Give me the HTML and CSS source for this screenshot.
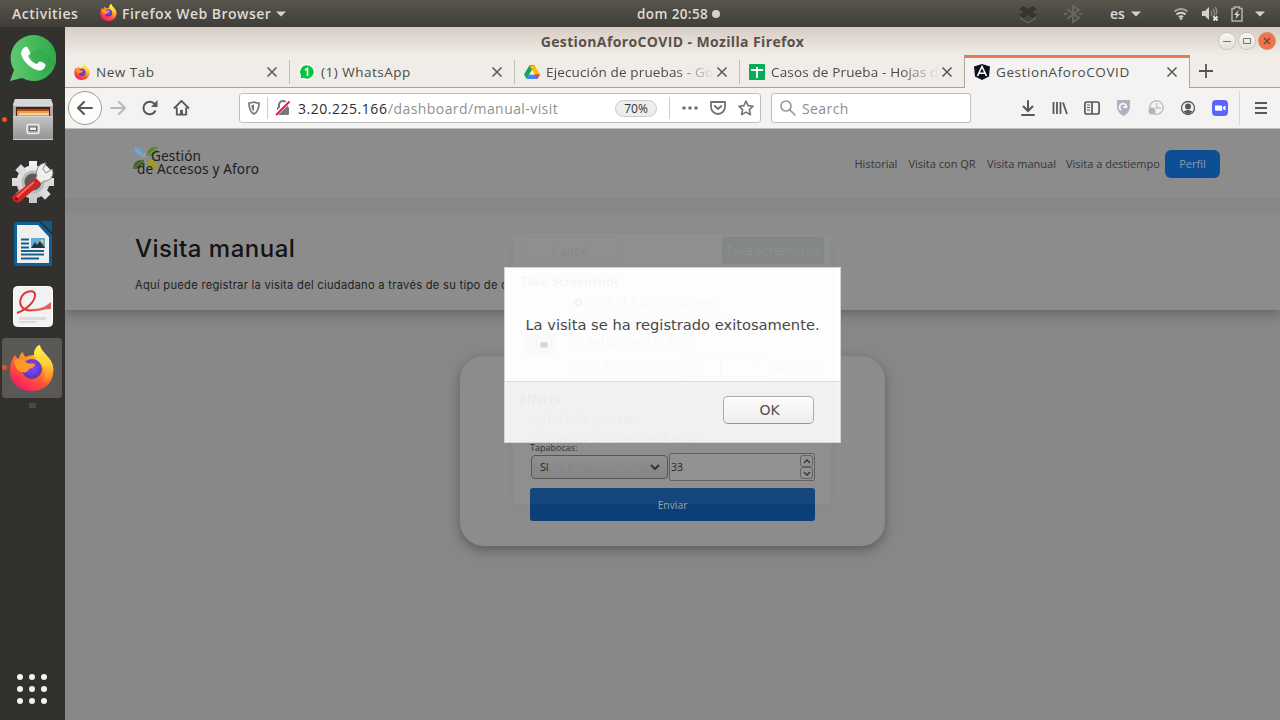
FILE: index.html
```html
<!DOCTYPE html>
<html lang="es">
<head>
<meta charset="utf-8">
<title>GestionAforoCOVID</title>
<link rel="stylesheet" href="styles.css">
</head>
<body>
<svg class="defs" width="0" height="0" aria-hidden="true">
  <defs>
    <linearGradient id="flame" x1="0.85" y1="0" x2="0.25" y2="1"><stop offset="0" stop-color="#fff44f"/><stop offset=".35" stop-color="#ffa62b"/><stop offset=".65" stop-color="#ff5634"/><stop offset="1" stop-color="#f5156c"/></linearGradient>
    <linearGradient id="tail" x1="0" y1="0" x2="0" y2="1"><stop offset="0" stop-color="#fff44f"/><stop offset=".5" stop-color="#ffcf33"/><stop offset="1" stop-color="#ff7a2b"/></linearGradient>
    <radialGradient id="globe" cx=".5" cy=".4" r=".6"><stop offset="0" stop-color="#8a4bff"/><stop offset="1" stop-color="#5335b5"/></radialGradient>
    <linearGradient id="steel" x1="0" y1="0" x2="0" y2="1"><stop offset="0" stop-color="#c4c4c4"/><stop offset="1" stop-color="#929292"/></linearGradient>
    <linearGradient id="gear" x1="0" y1="0" x2="0" y2="1"><stop offset="0" stop-color="#f2f2f2"/><stop offset="1" stop-color="#c6c6c6"/></linearGradient>
    <linearGradient id="wa" x1="0" y1="0" x2="1" y2="0"><stop offset="0" stop-color="#5fc972"/><stop offset="1" stop-color="#2eaa48"/></linearGradient>
    <symbol id="firefox" viewBox="0 0 44 46">
      <path fill="url(#flame)" d="M5 10c1 2 2 3 4 4 0-3 1-5 4-7 0 2 1 4 3 5 2-1 5-2 8-2 0-4 2-8 6-10 0 4 4 7 7 11 6 6 7 12 6 18-1 10-10 17-21 17C9 46 0 38 0 25c0-6 2-11 5-15z"/>
      <path fill="url(#tail)" d="M24 8c1-4 2-7 6-8 0 4 4 7 7 11 6 6 7 12 6 17-2 6-6 9-11 9 3-3 4-9 1-14-2-4-8-8-9-15z"/>
      <circle cx="22" cy="24" r="10" fill="url(#globe)"/>
      <path fill="#ff9a28" d="M5 15c5-2 8 0 12 3 2 1 5 0 8 1 0 3-3 4-6 5-1 3-4 4-7 3-3-1-5-2-6-5-1-2-2-4-1-7z"/>
    </symbol>
    <symbol id="close" viewBox="0 0 12 12"><path d="M1.500 1.500l9 9M10.500 1.500l-9 9" fill="none" stroke="#575754" stroke-width="1.500"/></symbol>
    <symbol id="caret" viewBox="0 0 10 6"><path d="M0 .5h10L5 5.500z" fill="#d5d2cc"/></symbol>
  </defs>
</svg>

<header class="topbar">
  <span class="activities">Activities</span>
  <svg class="tb-fox" width="17" height="17"><use href="#firefox"/></svg>
  <span class="appname">Firefox Web Browser</span>
  <svg class="tb-caret" width="10" height="6"><use href="#caret"/></svg>
  <span class="clock">dom 20:58</span><i class="dot"></i>
  <div class="tray">
    <svg width="20" height="20" viewBox="0 0 20 20" fill="#353431"><path d="M5.500 2L1 5l4.500 3L1 11l4.500 3 4.500-3 4.500 3 4.500-3-4.500-3 4.500-3-4.500-3L10 5z"/><path d="M2 14l8 5 8-5" fill="none" stroke="#77746d"/></svg>
    <svg class="bt" width="20" height="20" viewBox="0 0 20 20" fill="none" stroke="#69665f" stroke-width="2"><path d="M4 5l12 9-6 4V2l6 4-12 9M1 10h3M16 10h3"/></svg>
    <span class="lang">es</span>
    <svg class="lang-caret" width="10" height="6"><use href="#caret"/></svg>
    <svg class="wifi" width="16" height="14" viewBox="0 0 16 14" fill="none" stroke="#d5d2cc" stroke-width="2"><path d="M1.500 4.500C5 1 11 1 14.500 4.500" stroke="#a5a29c"/><path d="M3.500 7.500C6 5 10 5 12.500 7.500M6 10c1-1 3-1 4 0"/><path d="M6 10.500h4l-2 3z" fill="#d5d2cc" stroke="none"/></svg>
    <svg class="vol" width="18" height="16" viewBox="0 0 18 16"><path d="M1 5h3l4-4v13L4 10H1z" fill="#d5d2cc"/><path d="M10 5q1.500 2.500 0 5M12 3q3 4 0 9M14 1q3 4 1 8" fill="none" stroke="#8b8881" stroke-width="1.500"/><path d="M12.500 10.500l4 4m0-4l-4 4" stroke="#e5e2dc" stroke-width="2"/></svg>
    <svg class="bat" width="12" height="16" viewBox="0 0 12 16"><path d="M1 2.500h2.500V1h5v1.500H11V15H1z" fill="none" stroke="#b5b2ac" stroke-width="1.500"/><path d="M7.500 4L3 9h2.500L4.500 13 9 8H6.500z" fill="#d5d2cc"/></svg>
    <svg width="10" height="6"><use href="#caret"/></svg>
  </div>
</header>

<div class="desktop">
  <nav class="dock">
    <div class="dock-item"><svg width="46" height="47" viewBox="0 0 46 47"><path d="M23 0a23 23 0 1 1-11 43L0 46l4-11A23 23 0 0 1 23 0z" fill="url(#wa)"/><path d="M21 18l9-5 13 12q0 7-8 14L24 30z" fill="#2ba044" opacity=".35"/><path d="M15 12c2-1 3 0 5 5 1 2-1 3-2 4 2 4 5 7 9 8 2-3 3-3 5-2 4 2 4 3 3 5-2 5-9 4-14 0-5-3-9-9-10-13 0-3 2-6 4-7z" fill="#fff"/></svg></div>
    <div class="dock-item running"><svg width="42" height="42" viewBox="0 0 42 42"><path d="M3 0h36l2 5v36H1V5z" fill="#aaa"/><path d="M3 0h36l2 7H1z" fill="#d7d7d7"/><path d="M4 8h34v11H4z" fill="#3c2615"/><path d="M5 10h32v3H5z" fill="#b2480f"/><path d="M5 12h32v5H5z" fill="#ef9950"/><path d="M7 14h30v2H7z" fill="#fbd196"/><path d="M1 17h40v24H1z" fill="url(#steel)"/><path d="M1 17.500h40M1 40.500h40" stroke="#d0d0d0"/><rect x="15" y="25.500" width="12" height="9" rx="1.500" fill="#aaa" stroke="#ececec" stroke-width="1.500"/><rect x="17.500" y="28" width="7" height="3.500" fill="#eee" stroke="#666"/></svg></div>
    <div class="dock-item"><svg width="42" height="44" viewBox="0 0 42 44"><g fill="url(#gear)"><circle cx="21" cy="22" r="16.500"/><path d="M17 1h8v9h-8zM17 34h8v9h-8zM0 18h9v8H0zM33 18h9v8h-9z"/><path d="M17 1h8v9h-8zM17 34h8v9h-8zM0 18h9v8H0zM33 18h9v8h-9z" transform="rotate(45 21 22)"/></g><circle cx="21" cy="22" r="10" fill="#5b5855" stroke="#bbb" stroke-width="3"/><path d="M25 16c-2-6 2-13 9-13l-3 6 3 4 6-4c3 6-2 13-8 12l-4 3-5-5z" fill="#eee" stroke="#888"/><path d="M24 18l5 5L8 42q-3 2-6-1t-1-5z" fill="#cf2525"/><path d="M22 22L5 37" stroke="#f06a5e" stroke-width="2"/><circle cx="4.500" cy="39" r="1.500" fill="#691010"/></svg></div>
    <div class="dock-item"><svg width="38" height="46" viewBox="0 0 38 46"><path d="M2 1h23l13 13v30q0 1-1 1H2q-2 0-2-2V3q0-2 2-2z" fill="#0d5f99"/><path d="M27 0h11v11z" fill="#0b5b93"/><path d="M3 4h21l11 12v26H3z" fill="#efefef"/><path d="M7 18.500h8M7 22.500h8M7 26.500h8M7 30h23M7 33.500h23M7 37.500h18" stroke="#17618f" stroke-width="1.800"/><path d="M17 17h14v10H17z" fill="#65add5"/><path d="M17 27l4-6 2 3 3-4 5 7z" fill="#26333b"/><circle cx="28" cy="20" r="1.500" fill="#ecd444"/></svg></div>
    <div class="dock-item"><svg width="40" height="41" viewBox="0 0 40 41"><rect x=".5" y=".5" width="39" height="40" rx="4" fill="#f2f2f2" stroke="#fff"/><path d="M6 31h27v3H6zM6 35h17v2H6z" fill="#dcdcdc"/><path d="M4 27C15 23 23 14 22 8 21 3 11 5 8 12 5 20 11 26 21 24" fill="none" stroke="#d73a3a" stroke-width="2"/><path d="M20 23c8 0 13-3 18-7v7c-7 0-12 3-18 2z" fill="#e06464"/></svg></div>
    <div class="dock-item active running"><svg width="44" height="46"><use href="#firefox"/></svg></div>
    <i class="ghost-item"></i>
    <div class="apps"><i></i><i></i><i></i><i></i><i></i><i></i><i></i><i></i><i></i></div>
  </nav>

  <section class="window">
    <div class="titlebar"><span class="wtitle">GestionAforoCOVID - Mozilla Firefox</span>
      <div class="wbtns"><i class="wb"><svg width="10" height="10" viewBox="0 0 10 10"><path d="M1 5.500h8" stroke="#77736d" stroke-width="1"/></svg></i><i class="wb"><svg width="10" height="10" viewBox="0 0 10 10"><path d="M1.500 2.500h7v5h-7z" fill="none" stroke="#77736d"/></svg></i><i class="wb red"><svg width="8" height="8" viewBox="0 0 8 8"><path d="M1 1l6 6M7 1L1 7" stroke="#66403a" stroke-width="1.200"/></svg></i></div>
    </div>
    <div class="tabs">
      <div class="tab"><svg width="16" height="16"><use href="#firefox"/></svg><span class="tt">New Tab</span><svg class="x" width="12" height="12"><use href="#close"/></svg></div>
      <div class="tab"><svg width="16" height="16" viewBox="0 0 16 16"><path d="M8 0a8 8 0 1 1-4 15l-4 1 1-4A8 8 0 0 1 8 0z" fill="#fff"/><path d="M8 1.300A6.700 6.700 0 1 1 4.500 13.700L1.500 14.500l.6-3A6.700 6.700 0 0 1 8 1.300z" fill="#09c244"/><path d="M6 6l2.500-1.500V12" fill="none" stroke="#fff" stroke-width="1.600"/></svg><span class="tt">(1) WhatsApp</span><svg class="x" width="12" height="12"><use href="#close"/></svg></div>
      <div class="tab"><svg width="16" height="16" viewBox="0 0 16 16"><path d="M5.300 1.500h5.400L5.400 10.500 2.700 15 0 10.500z" fill="#18a45b"/><path d="M5.300 1.500h5.400L8 6z" fill="#11813e"/><path d="M5.300 1.500h5.400L16 10.500h-5.300z" fill="#ffba00"/><path d="M5.300 10.500H16L13.300 15H2.700z" fill="#4285f4"/><path d="M10.700 10.500H16L13.300 15z" fill="#ea4335"/><path d="M8 6l2.700 4.500H5.300z" fill="#f0ede8"/></svg><span class="tt fade">Ejecución de pruebas - Go</span><svg class="x" width="12" height="12"><use href="#close"/></svg></div>
      <div class="tab"><svg width="16" height="16" viewBox="0 0 16 16"><rect width="16" height="16" rx="1" fill="#0aaa57"/><path d="M2 6h12M8 3v11" stroke="#fff" stroke-width="1.800" fill="none"/></svg><span class="tt fade">Casos de Prueba - Hojas d</span><svg class="x" width="12" height="12"><use href="#close"/></svg></div>
      <div class="tab current"><svg width="16" height="16" viewBox="0 0 16 16"><path d="M8 0l8 2.500-1 10L8 16l-7-3.500L0 2.500z" fill="#0b121d"/><path d="M3.500 12L8 2.500 12.500 12M5.500 9.300h5" fill="none" stroke="#fff" stroke-width="1.600"/></svg><span class="tt">GestionAforoCOVID</span><svg class="x" width="12" height="12"><use href="#close"/></svg></div>
      <svg class="plus" width="14" height="14" viewBox="0 0 14 14"><path d="M7 0v14M0 7h14" stroke="#555" stroke-width="1.800"/></svg>
    </div>
    <div class="toolbar">
      <div class="back"><svg width="16" height="14" viewBox="0 0 16 14" fill="none" stroke="#585856" stroke-width="2" stroke-linejoin="round" stroke-linecap="round"><path d="M15 7H1.500M7 1L1 7l6 6"/></svg></div>
      <svg class="fwd" width="16" height="14" viewBox="0 0 16 14" fill="none" stroke="#b9b9b7" stroke-width="2" stroke-linecap="round" stroke-linejoin="round"><path d="M1 7h13.500M9 1l6 6-6 6"/></svg>
      <svg class="reload" width="16" height="16" viewBox="0 0 16 16"><path d="M13 4.500a6.300 6.300 0 1 0 .5 6" fill="none" stroke="#585856" stroke-width="2"/><path d="M15.500 0v7H9z" fill="#585856"/></svg>
      <svg class="home" width="17" height="16" viewBox="0 0 18 17" fill="none" stroke="#585856" stroke-width="2" stroke-linejoin="round"><path d="M1 9l8-8 8 8M4 8v7.500h10V8"/><path d="M9 15v-4.500" stroke-width="3"/></svg>
      <div class="urlbar">
        <svg width="12" height="14" viewBox="0 0 12 14"><path d="M6 1c2 1 3 1 5 1 0 6-1 9-5 11C2 11 1 8 1 2c2 0 3 0 5-1z" fill="none" stroke="#777" stroke-width="1.700"/><path d="M6 3.500v6.700C4 9 3.500 7 3.400 4.200z" fill="#777"/></svg>
        <i class="vline"></i>
        <svg class="lock" width="16" height="16" viewBox="0 0 16 16"><path d="M4 8V5a4 4 0 0 1 8 0v3" fill="none" stroke="#777" stroke-width="2"/><rect x="2" y="7" width="12" height="8" rx="1" fill="#777"/><path d="M.5 14.500L14 1.500" stroke="#fff" stroke-width="4"/><path d="M1 15L14.500 1.500" stroke="#f50a4c" stroke-width="1.800"/></svg>
        <span class="host">3.20.225.166</span><span class="path">/dashboard/manual-visit</span>
        <span class="zoom"><span>70%</span></span>
        <i class="vline v2"></i>
        <svg class="dots" width="16" height="4" viewBox="0 0 16 4" fill="#72726f"><circle cx="2" cy="2" r="1.800"/><circle cx="8" cy="2" r="1.800"/><circle cx="14" cy="2" r="1.800"/></svg>
        <svg class="pocket" width="16" height="14" viewBox="0 0 16 14" fill="none" stroke="#72726f" stroke-width="1.800" stroke-linecap="round" stroke-linejoin="round"><path d="M1 1h14v5a7 7 0 0 1-14 0z"/><path d="M4.700 5L8 8l3.300-3"/></svg>
        <svg class="star" width="16" height="16" viewBox="0 0 16 16" fill="none" stroke="#72726f" stroke-width="1.600" stroke-linejoin="round"><path d="M8 1l2.100 4.600 5 .6-3.700 3.400 1 5L8 12.100l-4.400 2.500 1-5L.9 6.200l5-.6z"/></svg>
      </div>
      <div class="searchbar"><svg width="16" height="16" viewBox="0 0 16 16" fill="none" stroke="#9b9b99" stroke-width="1.700" stroke-linecap="round"><circle cx="6" cy="6" r="5"/><path d="M9.800 9.800L15 15"/></svg><span>Search</span></div>
      <div class="tools">
        <svg width="16" height="16" viewBox="0 0 16 16" fill="none" stroke="#585856" stroke-width="2" stroke-linecap="round"><path d="M8 1v9M3.500 6.500L8 11l4.500-4.500M2 15h12"/></svg>
        <svg width="16" height="16" viewBox="0 0 16 16" fill="none" stroke="#585856" stroke-width="1.800"><path d="M1.500 2v12M5 2v12M8.500 2v12M11 2.500l4 11.500"/></svg>
        <svg width="16" height="16" viewBox="0 0 16 16" fill="none" stroke="#585856" stroke-width="1.700"><rect x=".9" y="2" width="14.200" height="12" rx="2"/><path d="M8 2v12"/><path d="M3 5h3M3 7.500h3M3 10h3" stroke-width="1"/></svg>
        <svg width="16" height="16" viewBox="0 0 16 16"><path d="M1 0h13v8q-1 5-6.500 8Q2 13 1 8z" fill="#afb0c0"/><path d="M5 10a3.500 3.500 0 1 1 5.500-3H7.500" fill="none" stroke="#f6f6fb" stroke-width="1.800"/></svg>
        <svg width="16" height="16" viewBox="0 0 16 16" fill="none" stroke="#c0c0be" stroke-width="1.500"><circle cx="8.500" cy="7.500" r="6.700"/><path d="M8.500 3v5H13"/><circle cx="4" cy="11" r="3.500" fill="#b5b5b3" stroke="none"/></svg>
        <svg width="16" height="16" viewBox="0 0 16 16"><circle cx="8" cy="8" r="6.500" fill="none" stroke="#585856" stroke-width="1.300"/><circle cx="8" cy="6.500" r="3" fill="#585856"/><path d="M3.500 11.500q4.500-3 9 0-4.500 5-9 0z" fill="#585856"/></svg>
        <svg width="16" height="16" viewBox="0 0 16 16"><rect width="16" height="16" rx="4" fill="#5667fa"/><path d="M3 5.500h6q1.200 0 1.200 1.200v4H4.200Q3 10.700 3 9.500zM11 7l2.500-1.500v5L11 9z" fill="#fff"/></svg>
      </div>
      <svg class="menu" width="12" height="12" viewBox="0 0 12 12"><path d="M0 1h12M0 6h12M0 11h12" stroke="#585856" stroke-width="2"/></svg>
    </div>

    <main class="page">
      <div class="site-head">
        <div class="brand">
          <svg class="leaves" width="26" height="22" viewBox="0 0 26 22"><path d="M1 0q10 0 10 9Q1 10 1 0z" fill="#6f9fc8"/><path d="M2 1l9 9 1-4" stroke="#9ebcd3" fill="none" stroke-width=".7"/><path d="M25 0q-11-1-11 9 8 1 11-9z" fill="#568431"/><path d="M24 1l-11 9" stroke="#92b270" stroke-width=".7"/><path d="M0 22q0-10 11-9-1 9-11 9z" fill="#3f6022"/><path d="M14 12q10 0 11 10-10 0-11-10z" fill="#a99b20"/><path d="M1 21l10-9M14 13l9 8" stroke="#7f8e50" stroke-width=".7"/></svg>
          <div class="brand-text"><div class="b1">Gestión</div><div class="b2">de Accesos y Aforo</div></div>
        </div>
        <nav class="links"><a class="l1">Historial</a><a class="l2">Visita con QR</a><a class="l3">Visita manual</a><a class="l4">Visita a destiempo</a><a class="perfil">Perfil</a></nav>
      </div>
      <div class="hero"><h1>Visita manual</h1><p>Aquí puede registrar la visita del ciudadano a través de su tipo de d</p></div>
      <div class="card">
        <label>Tapabocas:</label>
        <div class="row">
          <div class="select"><span>SI</span><svg width="10" height="7" viewBox="0 0 10 7"><path d="M1 1l4 4 4-4" fill="none" stroke="#2b2b2b" stroke-width="2"/></svg></div>
          <div class="number"><span>33</span><div class="spin"><i><svg width="8" height="5" viewBox="0 0 8 5"><path d="M1 4l3-3 3 3" fill="none" stroke="#303030" stroke-width="1.500"/></svg></i><i><svg width="8" height="5" viewBox="0 0 8 5"><path d="M1 1l3 3 3-3" fill="none" stroke="#303030" stroke-width="1.500"/></svg></i></div></div>
        </div>
        <div class="send">Enviar</div>
      </div>
    </main>
  </section>
</div>

<div class="dialog">
  <div class="msg"><span>La visita se ha registrado exitosamente.</span></div>
  <div class="foot"><div class="ok">OK</div></div>
</div>

<div class="ghost">
  <div class="g-head"><span class="g-cancel">Cancel</span><span class="g-take">Take Screenshot</span></div>
  <div class="g-body">
    <b>Take Screenshot</b>
    <span class="g-opt"><i class="sel"></i>Grab the whole screen</span>
    <span class="g-opt"><i></i>Grab the current window</span>
    <span class="g-opt"><i></i>Select area to grab</span>
    <span class="g-delay">Grab after a delay of<em>0</em><em class="pm">−</em><em class="pm strong">+</em>seconds</span>
    <b class="g-eff">Effects</b>
    <span class="g-chk"><i></i>Include pointer</span>
    <span class="g-chk"><i></i>Include the window border</span>
    <span class="g-apply">Apply effect:<em>None</em><svg width="6" height="4" viewBox="0 0 6 4"><path d="M0 0h6L3 4z"/></svg></span>
  </div>
  <svg class="g-cam" width="34" height="24" viewBox="0 0 34 24"><rect y="2" width="34" height="21" rx="2" fill="#000" opacity=".012"/><circle cx="21" cy="12" r="8" fill="none" stroke="#000" opacity=".03"/><rect x="17" y="10" width="8" height="6" rx="2" opacity=".13"/></svg>
</div>
</body>
</html>
```
FILE: styles.css
```css
* { box-sizing: border-box; }
body { margin: 0; width: 1280px; height: 720px; overflow: hidden; position: relative; display: flex; flex-direction: column; font-family: "Open Sans", "Noto Sans", sans-serif; white-space: nowrap; }
.defs { position: absolute; }
svg { display: block; flex: none; }
i, em { font-style: normal; }

.topbar { height: 27px; flex: none; display: flex; align-items: center; background: linear-gradient(#58554d, #403e39); color: #dfdbd2; font-weight: 600; font-size: 14px; padding: 0 15px 0 12px; }
.activities { width: 88px; letter-spacing: .5px; }
.tb-fox { margin-top: -2px; }
.appname { margin-left: 5px; width: 149px; letter-spacing: .48px; }
.tb-caret { margin-left: 5px; }
.clock { margin-left: 351px; width: 72px; font-size: 13.500px; letter-spacing: .4px; }
.dot { width: 8px; height: 8px; border-radius: 50%; background: #d5d2cc; margin-left: 3px; }
.tray { margin-left: auto; display: flex; align-items: center; }
.bt { margin-left: 25px; }
.lang { margin-left: 27px; width: 16px; }
.lang-caret { margin-left: 5px; }
.wifi { margin-left: 32px; }
.vol { margin-left: 12px; }
.bat { margin: 0 12px 0 12px; }

.desktop { flex: 1; display: flex; min-height: 0; }
.dock { width: 65px; flex: none; background: #33312d; display: flex; flex-direction: column; align-items: center; gap: 2px; padding: 1px 1px 0 0; }
.dock-item { width: 60px; height: 60px; flex: none; display: flex; align-items: center; justify-content: center; border-radius: 4px; position: relative; }
.dock-item:not(.active) { padding-left: 1px; }
.dock-item.active { background: #5b5955; }
.running::before { content: ""; position: absolute; left: 0; top: 27px; width: 5px; height: 5px; border-radius: 50%; background: #e95420; }
.ghost-item { width: 7px; height: 5px; background: #4b4946; margin-top: 3px; }
.apps { margin: auto 0 16px; display: grid; grid-template-columns: repeat(3, 6px); gap: 6px; }
.apps i { width: 6px; height: 6px; background: #f3f3f2; border-radius: 50%; }

.window { flex: 1; display: flex; flex-direction: column; min-width: 0; background: #f3f2f1; }
.titlebar { height: 28px; flex: none; display: flex; align-items: center; justify-content: center; position: relative; background: linear-gradient(#d7cdc4, #efece7); color: #5b5149; font-size: 14px; font-weight: 700; }
.wtitle { letter-spacing: .37px; }
.wbtns { position: absolute; right: 5px; top: 6px; display: flex; gap: 4px; }
.wb { width: 16px; height: 16px; border-radius: 50%; display: flex; align-items: center; justify-content: center; background: linear-gradient(#f8f7f5, #e4e0da); box-shadow: 0 0 0 1px #c8c1ba; }
.wb.red { background: #ee7449; box-shadow: 0 0 0 1px #dd8a6c; }

.tabs { height: 33px; flex: none; display: flex; background: #f0ede8; border-bottom: 1px solid #a5a29e; }
.tab { width: 225px; display: flex; align-items: center; padding: 1px 12px 0 9px; position: relative; color: #4b4a49; font-size: 13.500px; letter-spacing: .5px; }
.tab:not(.current):not(:nth-child(4))::after { content: ""; position: absolute; right: 0; top: 5px; height: 24px; width: 1px; background: #c1bebb; }
.tab.current { width: 226px; height: 33px; margin-left: -1px; background: #f4f3f2; border: 1px solid #aaa7a4; border-bottom: 0; border-top: 3px solid #ed774c; padding: 0 11px 2px 9px; letter-spacing: .58px; }
.tt { margin-left: 6px; width: 166px; }
.fade { letter-spacing: .15px; -webkit-mask-image: linear-gradient(90deg, #000 130px, transparent 168px); mask-image: linear-gradient(90deg, #000 130px, transparent 168px); }
.x { margin-left: auto; }
.plus { margin: 9px 0 0 9px; }

.toolbar { height: 41px; flex: none; display: flex; align-items: center; padding: 0 13px 0 3px; background: #f4f3f2; border-bottom: 1px solid #c0bebc; }
.back { width: 34px; height: 34px; border: 1px solid #9a9a98; background: #fcfcfb; border-radius: 50%; display: flex; align-items: center; justify-content: center; }
.fwd { margin-left: 8px; }
.reload { margin-left: 16px; }
.home { margin-left: 15px; }
.urlbar { margin-left: 49px; width: 522px; height: 30px; border: 1px solid #c1bfbd; border-radius: 3px; background: #fff; display: flex; align-items: center; padding: 0 6px 0 8px; font-size: 14px; }
.vline { width: 1px; height: 22px; background: #cfcdcb; margin: 0 7px 0 7px; }
.host { margin-left: 7px; width: 90px; color: #2d2d2d; letter-spacing: .53px; }
.path { width: 171px; color: #919190; letter-spacing: .42px; }
.zoom { margin-left: 56px; width: 42px; height: 17px; border: 1px solid #c9c8ca; border-radius: 9px; background: #ededee; color: #333; font-size: 12px; line-height: 15px; text-align: center; }
.v2 { margin: 0 12px; }
.pocket { margin-left: 12px; }
.star { margin-left: 12px; }
.searchbar { margin-left: 10px; width: 200px; height: 30px; border: 1px solid #c1bfbd; border-radius: 3px; background: #fff; display: flex; align-items: center; padding-left: 8px; gap: 6px; font-size: 14px; letter-spacing: .4px; color: #8d8d8c; }
.tools { margin-left: 49px; display: flex; gap: 16px; }
.tools::after { content: ""; width: 1px; height: 34px; background: #d8d6d4; margin: -9px 0 -9px -5px; }
.menu { margin-left: auto; }

.page { flex: 1; display: flex; flex-direction: column; background: #878787; min-height: 0; overflow: hidden; }
.site-head { height: 69px; flex: none; background: #8c8c8c; display: flex; justify-content: space-between; padding: 18px 60px 0 68px; }
.brand { display: flex; }
.brand-text { margin-left: -22px; position: relative; font-family: "Noto Sans", sans-serif; font-size: 13.600px; letter-spacing: .15px; line-height: 13px; color: #1d1d1d; padding-top: 2px; }
.b1 { padding-left: 14px; }
.links { display: flex; align-items: center; height: 28px; margin-top: 3px; color: #363636; font-size: 11px; line-height: 26px; }
.l1 { width: 54px; } .l2 { width: 78.500px; } .l3 { width: 79px; } .l4 { width: 99px; }
.perfil { width: 55px; height: 28px; border-radius: 6px; background: #0d4f94; color: #8c9aaa; text-align: center; line-height: 28px; }
.hero { height: 97px; flex: none; margin-top: 15px; background: #8c8c8c; box-shadow: 0 4px 11px rgba(0,0,0,.26); clip-path: inset(0 0 -20px 0); padding: 22px 70px 0; color: #131313; }
h1 { margin: 0; font-family: Inter, sans-serif; font-size: 24px; font-weight: 500; line-height: 28px; letter-spacing: .5px; }
.hero p { margin: 14px 0 0; font-family: Inter, sans-serif; font-size: 11.200px; letter-spacing: .26px; line-height: 16px; color: #222; }
.card { width: 425px; height: 190px; flex: none; margin: 46px 0 0 395px; background: #8c8c8c; border-radius: 24px; box-shadow: 0 4px 12px rgba(0,0,0,.32); padding: 85px 70px 0; color: #202020; }
.card label { display: block; font-size: 9px; line-height: 14px; height: 12px; color: #292929; }
.row { display: flex; align-items: center; height: 28px; font-size: 10.500px; gap: 1px; }
.select { width: 137px; height: 24px; margin-left: 1px; border: 1px solid #505050; border-radius: 4px; background: linear-gradient(#8d8d8d, #828282); display: flex; align-items: center; justify-content: space-between; padding: 0 7px 0 8px; }
.number { width: 146px; height: 28px; border: 1px solid #5b5b5b; border-radius: 2px; background: #8f8f8f; display: flex; justify-content: space-between; align-items: center; padding: 0 1px; }
.spin i { display: flex; width: 13px; height: 12px; border: 1px solid #5d5d5d; border-radius: 3px; align-items: center; justify-content: center; }
.send { margin-top: 7px; height: 33px; border-radius: 3px; background: #0d3f79; color: #9aa5b2; font-size: 10.300px; line-height: 34px; text-align: center; }

.dialog { position: absolute; left: 504px; top: 267px; width: 337px; height: 176px; border: 1px solid #d4d4d4; background: #fff; font-family: "DejaVu Sans", sans-serif; color: #3f3f3f; display: flex; flex-direction: column; }
.msg { height: 113px; display: flex; align-items: center; justify-content: center; font-size: 14.660px; }
.foot { flex: 1; background: #f3f3f3; border-top: 1px solid #dedede; display: flex; justify-content: flex-end; padding: 14px 26px 0 0; }
.ok { width: 91px; height: 28px; border: 1px solid #aaa; border-bottom-color: #8f8f8f; border-radius: 5px; background: linear-gradient(#fff, #f0efed); text-align: center; line-height: 26px; padding-left: 2px; font-size: 14px; color: #4a4a4a; }

/* screenshot tool fading out above the page */
.ghost { position: absolute; left: 513px; top: 234px; width: 318px; height: 270px; background: rgba(222,222,222,.05); border-radius: 3px 3px 0 0; box-shadow: 0 3px 12px rgba(0,0,0,.025); color: rgba(0,0,0,.04); font-size: 12.300px; pointer-events: none; }
.g-head { height: 33px; display: flex; justify-content: space-between; padding: 3px 7px; line-height: 27px; text-align: center; }
.g-cancel { width: 102px; color: rgba(0,0,0,.08); border: 1px solid rgba(0,0,0,.02); border-radius: 3px; }
.g-take { width: 102px; background: rgba(40,80,60,.11); color: rgba(255,255,255,.09); border-radius: 3px; }
.g-body { display: flex; flex-direction: column; padding: 5px 0 0 7px; line-height: 20px; }
.g-body b { font-size: 12px; }
.g-opt { padding-left: 54px; display: flex; align-items: center; gap: 4px; }
.g-opt i, .g-chk i { width: 9px; height: 9px; border-radius: 50%; border: 1px solid rgba(0,0,0,.02); }
.g-opt .sel { border: 3px solid rgba(220,90,40,.06); }
.g-delay { height: 28px; margin-left: 49px; display: flex; align-items: center; font-size: 11.500px; }
.g-delay em { width: 36px; padding-left: 6px; margin-left: 6px; border: 1px solid rgba(0,0,0,.015); }
.g-delay .pm { width: 23px; margin-left: 0; border-left: 0; border-right: 0; }
.g-delay .strong { margin-right: 8px; }
.g-eff { margin-top: 10px; }
.g-chk { padding-left: 14px; display: flex; gap: 5px; align-items: center; }
.g-apply { margin: 7px 0 0 12px; display: flex; align-items: center; color: rgba(0,0,0,.06); }
.g-apply em { margin-left: 16px; }
.g-apply svg { margin-left: 26px; fill: rgba(0,0,0,.12); }
.g-cam { position: absolute; left: 10px; top: 98px; }
```
